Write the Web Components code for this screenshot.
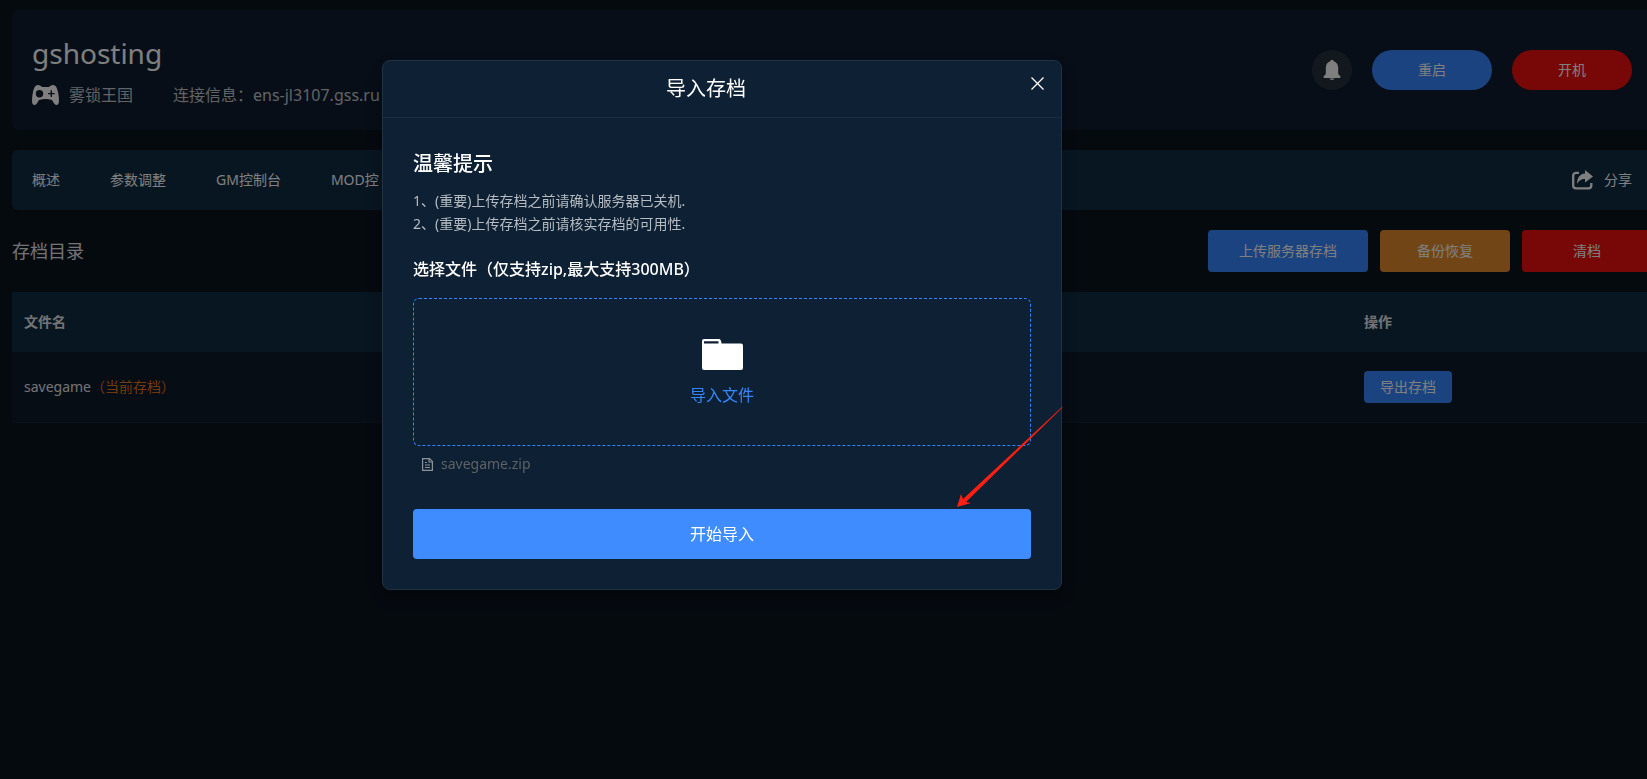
<!DOCTYPE html>
<html lang="zh-CN">
<head>
<meta charset="UTF-8">
<meta name="viewport" content="width=device-width, initial-scale=1">
<title>gshosting</title>
<style>
  html, body {
    height: 100%;
  }

  body {
    margin: 0;
    overflow: hidden;
    background: #0b141f;
    color: #fff;
    font-family: "Noto Sans", "Noto Sans CJK SC", sans-serif;
    font-size: 14px;
    line-height: 20px;
  }
</style>
</head>
<body>
<server-page></server-page>
<import-dialog title="导入存档" file="savegame.zip"></import-dialog>

<script>
(function () {
  const icons = {
    gamepad: '<path fill-rule="evenodd" d="M6 0C8 0 9 1 10 2h7C18 1 19 0 21 0c3 0 4 3 5 7 1 5 1.500 11 0 12.500-2 1.500-4-.5-6-4.500-4-1.500-9-1.500-13 0-2 4-4 6-6 4.500C-.5 18 0 12 1 7 2 3 3 0 6 0zM7.500 5a3.700 3.700 0 1 0 0 7.400 3.700 3.700 0 0 0 0-7.400zM18.600 5.300v2.600H16v1.400h2.600v2.600H20V9.300h2.600V7.900H20V5.300z"/>',
    bell: '<path d="M9 0c1 0 1.500.5 1.700 1.200C13.800 2.200 15.200 4.700 15.200 8v6l2.100 2.200V18H.7v-1.800L2.800 14V8c0-3.300 1.400-5.800 4.500-6.800C7.500.5 8 0 9 0zM6.500 18.600h5C11.200 19.600 10.200 20 9 20s-2.200-.4-2.500-1.400z"/>',
    share: '<path d="M7 2.800H4A2.800 2.800 0 0 0 1.200 5.600V15.500A2.800 2.800 0 0 0 4 18.300h12.500a2.800 2.800 0 0 0 2.800-2.800V13" fill="none" stroke="currentColor" stroke-width="2.300"/><path d="M13 0l8 6.500-8 6V9C9 9 7 10.500 5 14c0-6 2.500-10 8-10.500z"/>',
    folder: '<path fill-rule="evenodd" d="M2 0h15c1.500 0 2.200 1.500 2.500 4.500H39a2 2 0 0 1 2 2V29a2 2 0 0 1-2 2H2a2 2 0 0 1-2-2V2a2 2 0 0 1 2-2zM2 2.200V4.500h14.500V2.200z"/>',
    file: '<path d="M.6.6h7L10.400 3.400v9H.6zM7 .8v3.200h3.200M3 4.500h2M3 7h5M3 9.500h5" fill="none" stroke="currentColor" stroke-width="1.200"/>',
    close: '<path d="M.5.5l12 12M12.500.5l-12 12" fill="none" stroke="currentColor" stroke-width="1.300"/>'
  };
  const sizes = {
    gamepad: [27, 20],
    bell: [18, 20],
    share: [21, 20],
    folder: [41, 31],
    file: [11, 13],
    close: [13, 13]
  };

  class AppIcon extends HTMLElement {
    constructor() {
      super();
      this._shadowRoot = this.attachShadow({ mode: 'open' });
    }

    static get observedAttributes() {
      return ['name'];
    }

    attributeChangedCallback() {
      const name = this.getAttribute('name');
      const [w, h] = sizes[name];
      this._shadowRoot.innerHTML = `
        <style>
          :host { display: inline-flex; flex: none; }
          svg { display: block; fill: currentColor; }
        </style>
        <svg width="${w}" height="${h}" viewBox="0 0 ${w} ${h}" aria-hidden="true">${icons[name]}</svg>
      `;
    }
  }
  window.customElements.define('app-icon', AppIcon);


  const buttonTemplate = document.createElement('template');
  buttonTemplate.innerHTML = `
  <style>
    :host {
      display: inline-flex;
      --bg: #3686fe;
    }

    :host([type="warning"]) {
      --bg: #e38b2c;
    }

    :host([type="danger"]) {
      --bg: #f01010;
    }

    button {
      flex: 1;
      height: 42px;
      padding: 0 31px;
      border: 0;
      border-radius: 4px;
      background: var(--bg);
      color: #fff;
      font: inherit;
      cursor: pointer;
    }

    :host([shape="round"]) button {
      width: 120px;
      height: 40px;
      border-radius: 20px;
    }

    :host([size="medium"]) button {
      min-width: 130px;
    }

    :host([size="small"]) button {
      height: 32px;
      padding: 0 16px;
    }

    :host([size="large"]) button {
      height: 50px;
      background: #3e8cff;
      font-size: 16px;
    }
  </style>
  <button type="button"><slot></slot></button>
  `;

  class AppButton extends HTMLElement {
    constructor() {
      super();
      this._shadowRoot = this.attachShadow({ mode: 'open' });
      this._shadowRoot.appendChild(buttonTemplate.content.cloneNode(true));
    }
  }
  window.customElements.define('app-button', AppButton);


  const headerTemplate = document.createElement('template');
  headerTemplate.innerHTML = `
  <style>
    :host {
      display: flex;
      align-items: center;
      justify-content: space-between;
      box-sizing: border-box;
      height: 120px;
      padding: 0 20px;
      border-radius: 6px;
      background: #0e1c2f;
    }

    h1 {
      margin: 0;
      font-size: 28px;
      font-weight: 400;
      line-height: 40px;
    }

    .info {
      display: flex;
      align-items: center;
      margin-top: 10px;
      color: #c3c6ca;
      font-size: 16px;
      line-height: 24px;
      white-space: nowrap;
    }

    .info app-icon {
      margin-right: 10px;
      color: #fff;
    }

    .game {
      margin-right: 40px;
    }

    .actions {
      display: flex;
      align-items: center;
      gap: 20px;
    }

    .bell {
      display: flex;
      align-items: center;
      justify-content: center;
      width: 40px;
      height: 40px;
      padding: 0;
      border: 0;
      border-radius: 50%;
      background: #26303d;
      color: #fff;
    }
  </style>
  <div>
    <h1><slot></slot></h1>
    <div class="info">
      <app-icon name="gamepad"></app-icon>
      <span class="game">雾锁王国</span>
      <span>连接信息：ens-jl3107.gss.ru</span>
    </div>
  </div>
  <div class="actions">
    <button class="bell" type="button" aria-label="通知"><app-icon name="bell"></app-icon></button>
    <app-button shape="round">重启</app-button>
    <app-button shape="round" type="danger">开机</app-button>
  </div>
  `;

  class ServerHeader extends HTMLElement {
    constructor() {
      super();
      this._shadowRoot = this.attachShadow({ mode: 'open' });
      this._shadowRoot.appendChild(headerTemplate.content.cloneNode(true));
    }
  }
  window.customElements.define('server-header', ServerHeader);


  const navTemplate = document.createElement('template');
  navTemplate.innerHTML = `
  <style>
    :host {
      display: flex;
      align-items: center;
      justify-content: space-between;
      height: 60px;
      padding: 0 20px;
      border-radius: 6px;
      background: #102c43;
    }

    nav {
      display: flex;
      gap: 50px;
    }

    a {
      color: #fff;
      text-decoration: none;
    }

    .share {
      display: flex;
      align-items: center;
      gap: 11px;
    }
  </style>
  <nav>
    <a href="#overview">概述</a>
    <a href="#params">参数调整</a>
    <a href="#gm">GM控制台</a>
    <a href="#mod">MOD控</a>
  </nav>
  <a class="share" href="#share"><app-icon name="share"></app-icon>分享</a>
  `;

  class ServerNav extends HTMLElement {
    constructor() {
      super();
      this._shadowRoot = this.attachShadow({ mode: 'open' });
      this._shadowRoot.appendChild(navTemplate.content.cloneNode(true));
    }
  }
  window.customElements.define('server-nav', ServerNav);


  const tableTemplate = document.createElement('template');
  tableTemplate.innerHTML = `
  <style>
    :host {
      display: block;
    }

    table {
      width: 100%;
      border-collapse: collapse;
      table-layout: fixed;
    }

    th, td {
      padding: 0 12px;
      text-align: left;
    }

    th {
      height: 60px;
      background: #102c43;
      color: #e6e7e9;
      font-weight: 700;
    }

    td {
      height: 70px;
      background: #0e1a2b;
      border-bottom: 1px solid #13212e;
      color: #e6e7e9;
    }

    .action {
      width: 276px;
    }

    .current {
      color: #e37318;
    }
  </style>
  <table>
    <thead>
      <tr><th>文件名</th><th class="action">操作</th></tr>
    </thead>
    <tbody></tbody>
  </table>
  `;

  class SaveTable extends HTMLElement {
    constructor() {
      super();
      this._shadowRoot = this.attachShadow({ mode: 'open' });
      this._shadowRoot.appendChild(tableTemplate.content.cloneNode(true));
      this.$body = this._shadowRoot.querySelector('tbody');
    }

    static get observedAttributes() {
      return ['name'];
    }

    attributeChangedCallback() {
      this.$body.innerHTML = `
        <tr>
          <td>${this.getAttribute('name')}<span class="current">（当前存档）</span></td>
          <td><app-button size="small">导出存档</app-button></td>
        </tr>
      `;
    }
  }
  window.customElements.define('save-table', SaveTable);


  const pageTemplate = document.createElement('template');
  pageTemplate.innerHTML = `
  <style>
    /* the content runs a little past the right edge of the window */
    :host {
      display: flex;
      flex-direction: column;
      gap: 20px;
      margin-right: -5px;
      padding: 10px 0 0 12px;
    }

    .toolbar {
      display: flex;
      align-items: center;
      justify-content: space-between;
    }

    h2 {
      margin: 0;
      color: #e6e7e9;
      font-size: 18px;
      font-weight: 400;
      line-height: 26px;
    }

    .buttons {
      display: flex;
      gap: 12px;
    }
  </style>
  <server-header>gshosting</server-header>
  <server-nav></server-nav>
  <div class="toolbar">
    <h2>存档目录</h2>
    <div class="buttons">
      <app-button>上传服务器存档</app-button>
      <app-button size="medium" type="warning">备份恢复</app-button>
      <app-button size="medium" type="danger">清档</app-button>
    </div>
  </div>
  <save-table name="savegame"></save-table>
  `;

  class ServerPage extends HTMLElement {
    constructor() {
      super();
      this._shadowRoot = this.attachShadow({ mode: 'open' });
      this._shadowRoot.appendChild(pageTemplate.content.cloneNode(true));
    }
  }
  window.customElements.define('server-page', ServerPage);


  const dialogTemplate = document.createElement('template');
  dialogTemplate.innerHTML = `
  <style>
    :host {
      position: fixed;
      inset: 0;
      display: flex;
      align-items: flex-start;
      justify-content: center;
      padding: 60px 203px 0 0;
      background: rgba(0, 0, 0, 0.5);
    }

    .dialog {
      position: relative;
      box-sizing: border-box;
      width: 680px;
      border: 1px solid #203344;
      border-radius: 8px;
      background: #0e2034;
      box-shadow: 0 6px 16px rgba(0, 0, 0, 0.3);
    }

    header {
      display: flex;
      align-items: center;
      height: 56px;
      padding: 0 12px;
      border-bottom: 1px solid #1a2d3d;
    }

    h2, h3, h4 {
      margin: 0;
      font-weight: 400;
    }

    h2 {
      flex: 1;
      font-size: 20px;
      line-height: 28px;
      text-align: center;
    }

    .close {
      align-self: flex-start;
      display: flex;
      justify-content: flex-end;
      width: 32px;
      padding: 16px 5px;
      border: 0;
      background: none;
      color: #fff;
    }

    .body {
      padding: 30px;
    }

    h3 {
      font-size: 20px;
      font-weight: 500;
      line-height: 32px;
    }

    ol {
      margin: 9px 0 22px;
      padding: 0;
      list-style: none;
      color: #b7bcc2;
      line-height: 23px;
    }

    h4 {
      font-size: 16px;
      font-weight: 500;
      line-height: 24px;
    }

    .upload {
      display: flex;
      flex-direction: column;
      align-items: center;
      justify-content: center;
      gap: 13px;
      box-sizing: border-box;
      width: 100%;
      height: 148px;
      margin-top: 17px;
      padding-top: 2px;
      border: 1px dashed #3686fe;
      border-radius: 6px;
      background: none;
      color: #3686fe;
      font: inherit;
      font-size: 16px;
      line-height: 24px;
    }

    .upload app-icon {
      color: #fff;
    }

    .file {
      display: flex;
      align-items: center;
      gap: 8px;
      margin: 7px 0 34px;
      padding-left: 9px;
      color: #8d9298;
      line-height: 22px;
    }

    .file span {
      color: #5d6267;
    }

    .submit {
      display: flex;
    }

    .submit app-button {
      flex: 1;
    }

    .arrow {
      position: absolute;
      right: -2px;
      bottom: 82px;
      fill: #ff1f12;
    }
  </style>
  <section class="dialog" role="dialog" aria-labelledby="title">
    <header>
      <h2 id="title"></h2>
      <button class="close" type="button" aria-label="关闭"><app-icon name="close"></app-icon></button>
    </header>
    <div class="body">
      <h3>温馨提示</h3>
      <ol>
        <li>1、(重要)上传存档之前请确认服务器已关机.</li>
        <li>2、(重要)上传存档之前请核实存档的可用性.</li>
      </ol>
      <h4>选择文件（仅支持zip,最大支持300MB）</h4>
      <button class="upload" type="button">
        <app-icon name="folder"></app-icon>
        导入文件
      </button>
      <div class="file"><app-icon name="file"></app-icon><span></span></div>
      <div class="submit"><app-button size="large">开始导入</app-button></div>
    </div>
    <svg class="arrow" width="106" height="100" viewBox="0 0 106 100" aria-hidden="true">
      <path d="M0 100L4 87l2 5L105 0l.5.5L9 95l5 1z"/>
    </svg>
  </section>
  `;

  class ImportDialog extends HTMLElement {
    constructor() {
      super();
      this._shadowRoot = this.attachShadow({ mode: 'open' });
      this._shadowRoot.appendChild(dialogTemplate.content.cloneNode(true));

      this.$title = this._shadowRoot.querySelector('h2');
      this.$file = this._shadowRoot.querySelector('.file span');
      this.$close = this._shadowRoot.querySelector('.close');

      this.$close.addEventListener('click', () => this.remove());
    }

    static get observedAttributes() {
      return ['title', 'file'];
    }

    attributeChangedCallback() {
      this.render();
    }

    render() {
      this.$title.textContent = this.getAttribute('title');
      this.$file.textContent = this.getAttribute('file');
    }
  }
  window.customElements.define('import-dialog', ImportDialog);
})()
</script>
</body>
</html>
